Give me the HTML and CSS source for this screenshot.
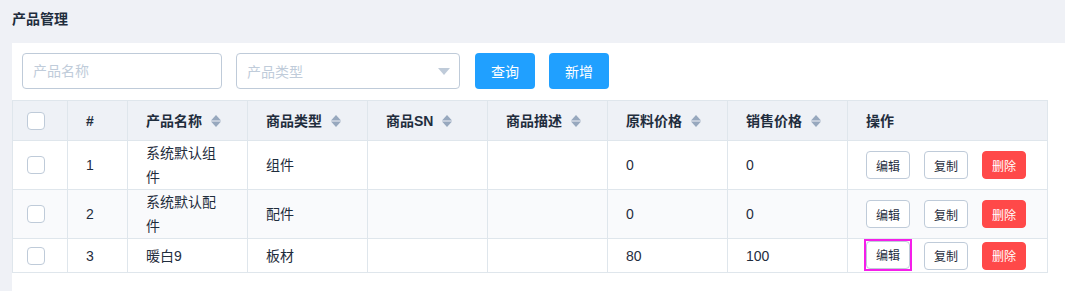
FILE: index.html
```html
<!DOCTYPE html>
<html lang="zh-CN">
<head>
<meta charset="utf-8">
<title>产品管理</title>
<link rel="stylesheet" href="styles.css">
</head>
<body>
<div class="page">
  <div class="title">产品管理</div>
  <div class="panel">
    <div class="toolbar">
      <input class="input" type="text" placeholder="产品名称">
      <div class="select">
        <span class="select-ph">产品类型</span>
        <svg class="select-caret" width="12" height="7" viewBox="0 0 12 7"><polygon points="0,0 12,0 6,7" fill="#bfcbd9"/></svg>
      </div>
      <button class="btn-primary btn-query">查询</button>
      <button class="btn-primary btn-add">新增</button>
    </div>
    <div class="table">
      <div class="row head">
        <div class="cell c-check"><span class="checkbox"></span></div>
        <div class="cell">#</div>
        <div class="cell">产品名称<svg class="sort" width="10" height="12" viewBox="0 0 10 12"><polygon points="0,5.5 5,0 10,5.5" fill="#97a8be"/><polygon points="0,6.5 10,6.5 5,12" fill="#97a8be"/></svg></div>
        <div class="cell">商品类型<svg class="sort" width="10" height="12" viewBox="0 0 10 12"><polygon points="0,5.5 5,0 10,5.5" fill="#97a8be"/><polygon points="0,6.5 10,6.5 5,12" fill="#97a8be"/></svg></div>
        <div class="cell">商品SN<svg class="sort" width="10" height="12" viewBox="0 0 10 12"><polygon points="0,5.5 5,0 10,5.5" fill="#97a8be"/><polygon points="0,6.5 10,6.5 5,12" fill="#97a8be"/></svg></div>
        <div class="cell">商品描述<svg class="sort" width="10" height="12" viewBox="0 0 10 12"><polygon points="0,5.5 5,0 10,5.5" fill="#97a8be"/><polygon points="0,6.5 10,6.5 5,12" fill="#97a8be"/></svg></div>
        <div class="cell">原料价格<svg class="sort" width="10" height="12" viewBox="0 0 10 12"><polygon points="0,5.5 5,0 10,5.5" fill="#97a8be"/><polygon points="0,6.5 10,6.5 5,12" fill="#97a8be"/></svg></div>
        <div class="cell">销售价格<svg class="sort" width="10" height="12" viewBox="0 0 10 12"><polygon points="0,5.5 5,0 10,5.5" fill="#97a8be"/><polygon points="0,6.5 10,6.5 5,12" fill="#97a8be"/></svg></div>
        <div class="cell">操作</div>
      </div>
      <div class="row">
        <div class="cell c-check"><span class="checkbox"></span></div>
        <div class="cell">1</div>
        <div class="cell"><span class="wrap">系统默认组件</span></div>
        <div class="cell">组件</div>
        <div class="cell"></div>
        <div class="cell"></div>
        <div class="cell">0</div>
        <div class="cell">0</div>
        <div class="cell c-ops"><button class="btn">编辑</button><button class="btn">复制</button><button class="btn btn-danger">删除</button></div>
      </div>
      <div class="row striped">
        <div class="cell c-check"><span class="checkbox"></span></div>
        <div class="cell">2</div>
        <div class="cell"><span class="wrap">系统默认配件</span></div>
        <div class="cell">配件</div>
        <div class="cell"></div>
        <div class="cell"></div>
        <div class="cell">0</div>
        <div class="cell">0</div>
        <div class="cell c-ops"><button class="btn">编辑</button><button class="btn">复制</button><button class="btn btn-danger">删除</button></div>
      </div>
      <div class="row">
        <div class="cell c-check"><span class="checkbox"></span></div>
        <div class="cell">3</div>
        <div class="cell"><span class="wrap">暖白9</span></div>
        <div class="cell">板材</div>
        <div class="cell"></div>
        <div class="cell"></div>
        <div class="cell">80</div>
        <div class="cell">100</div>
        <div class="cell c-ops"><span class="focus-ring"><button class="btn">编辑</button></span><button class="btn">复制</button><button class="btn btn-danger">删除</button></div>
      </div>
    </div>
  </div>
</div>
</body>
</html>
```
FILE: styles.css
```css
* { box-sizing: border-box; }
html, body { margin: 0; padding: 0; }
body {
  background: #eff1f6;
  font-family: "Liberation Sans", "Noto Sans CJK SC", sans-serif;
  font-size: 14px;
  color: #1f2d3d;
  height: 291px;
  overflow: hidden;
}
.page { padding-left: 12px; }
.title {
  height: 43px;
  padding-top: 10px;
  line-height: 18px;
  font-size: 14px;
  font-weight: bold;
  color: #1f2d3d;
}
.panel {
  background: #fff;
  height: 248px;
}
.toolbar {
  display: flex;
  align-items: center;
  padding: 10px 0 11px 10px;
}
.input {
  width: 200px;
  height: 36px;
  border: 1px solid #bfcbd9;
  border-radius: 4px;
  padding: 0 10px;
  font-family: inherit;
  font-size: 14px;
  color: #1f2d3d;
  outline: none;
  margin: 0;
}
.input::placeholder { color: #c0ccda; }
.select {
  width: 224px;
  height: 36px;
  margin-left: 14px;
  border: 1px solid #bfcbd9;
  border-radius: 4px;
  padding: 0 10px;
  display: flex;
  align-items: center;
  justify-content: space-between;
}
.select-ph { color: #c0ccda; }
.select-caret { margin-right: -1px; }
.btn-primary {
  width: 60px;
  height: 36px;
  border: none;
  border-radius: 4px;
  background: #20a0ff;
  color: #fff;
  font-family: inherit;
  font-size: 14px;
  padding: 0;
}
.btn-query { margin-left: 15px; }
.btn-add { margin-left: 14px; }

.table {
  width: 1036px;
  border-left: 1px solid #dfe6ec;
  border-top: 1px solid #dfe6ec;
}
.row {
  display: grid;
  grid-template-columns: 55px 60px repeat(6, 120px) 200px;
  background: #fff;
}
.row.striped { background: #f9fafc; }
.row.head { background: #eef1f6; }
.cell {
  border-right: 1px solid #dfe6ec;
  border-bottom: 1px solid #dfe6ec;
  padding: 0 18px;
  line-height: 24px;
  display: flex;
  align-items: center;
  min-height: 34px;
}
.head .cell {
  min-height: 40px;
  font-weight: bold;
}
.wrap {
  display: block;
  width: 80px;
  word-break: break-all;
}
.c-check { padding: 0 0 0 14px; }
.checkbox {
  width: 18px;
  height: 18px;
  border: 1px solid #bfcbd9;
  border-radius: 4px;
  background: #fff;
  display: block;
}
.sort { margin-left: 9px; flex: none; }
.c-ops { gap: 14px; padding-top: 2px; padding-bottom: 2px; }
.btn {
  width: 44px;
  height: 28px;
  border: 1px solid #bfcbd9;
  border-radius: 4px;
  background: #fff;
  color: #1f2d3d;
  font-family: inherit;
  font-size: 12px;
  padding: 0;
  margin: 0;
  display: block;
}
.btn-danger {
  background: #ff4949;
  border-color: #ff4949;
  color: #fff;
}
.focus-ring {
  display: block;
  outline: 2px solid #f51ee9;
  margin-top: -2px;
}
```
